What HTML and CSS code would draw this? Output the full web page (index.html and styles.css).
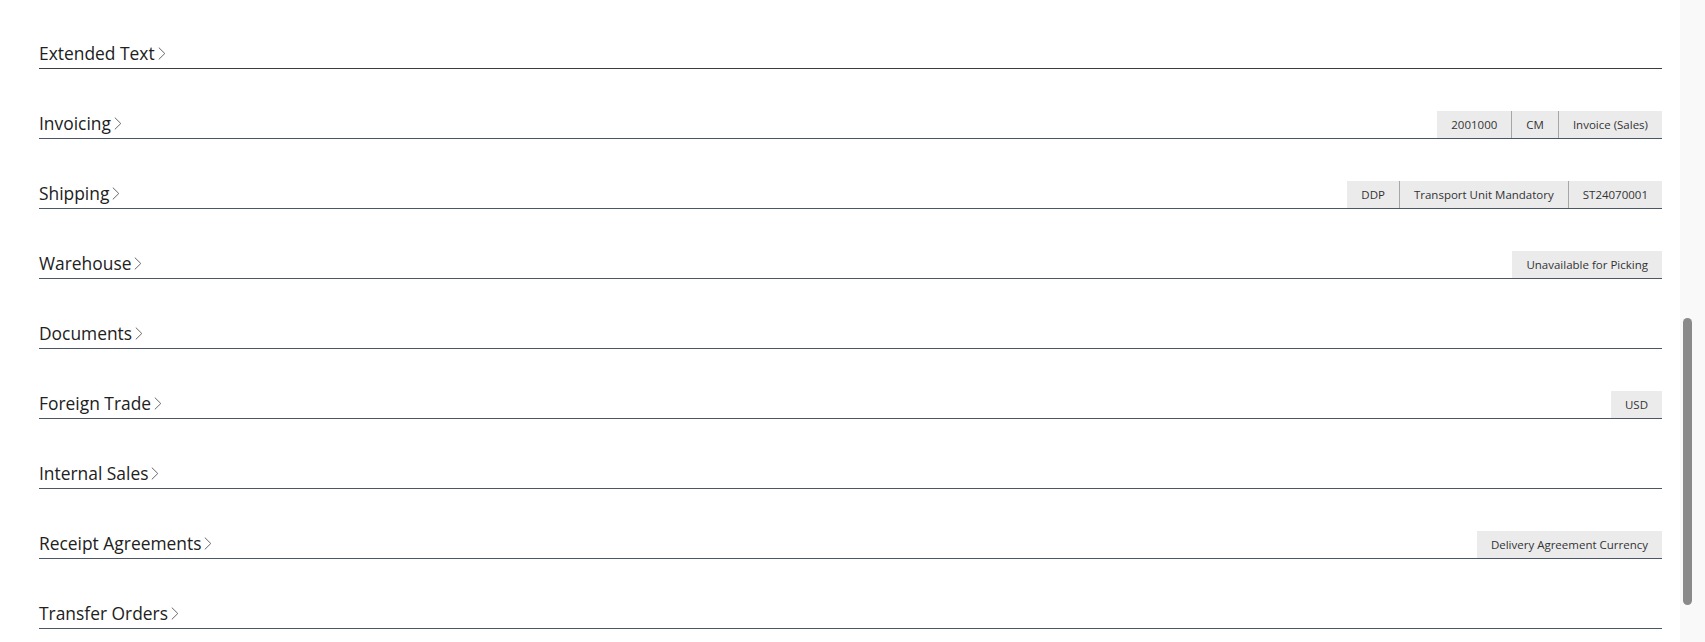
FILE: index.html
```html
<!DOCTYPE html>
<html lang="en">
<head>
    <meta charset="UTF-8">
    <meta name="viewport" content="width=device-width, initial-scale=1.0">
    <title>Sales Order - FastTabs</title>
    <link rel="stylesheet" href="styles.css">
</head>
<body>
    <div class="page">
        <div class="main">
            <div class="fasttab first">
                <div class="tab-title">Extended Text <span class="chevron"><svg width="8" height="13" viewBox="0 0 8 13"><polyline points="0.8,0.6 6.8,6.5 0.8,12.4"/></svg></span></div>
            </div>

            <div class="fasttab">
                <div class="tab-title">Invoicing <span class="chevron"><svg width="8" height="13" viewBox="0 0 8 13"><polyline points="0.8,0.6 6.8,6.5 0.8,12.4"/></svg></span></div>
                <div class="summary">
                    <span class="pill">2001000</span>
                    <span class="pill">CM</span>
                    <span class="pill">Invoice (Sales)</span>
                </div>
            </div>

            <div class="fasttab">
                <div class="tab-title">Shipping <span class="chevron"><svg width="8" height="13" viewBox="0 0 8 13"><polyline points="0.8,0.6 6.8,6.5 0.8,12.4"/></svg></span></div>
                <div class="summary">
                    <span class="pill">DDP</span>
                    <span class="pill">Transport Unit Mandatory</span>
                    <span class="pill">ST24070001</span>
                </div>
            </div>

            <div class="fasttab">
                <div class="tab-title">Warehouse <span class="chevron"><svg width="8" height="13" viewBox="0 0 8 13"><polyline points="0.8,0.6 6.8,6.5 0.8,12.4"/></svg></span></div>
                <div class="summary">
                    <span class="pill">Unavailable for Picking</span>
                </div>
            </div>

            <div class="fasttab">
                <div class="tab-title">Documents <span class="chevron"><svg width="8" height="13" viewBox="0 0 8 13"><polyline points="0.8,0.6 6.8,6.5 0.8,12.4"/></svg></span></div>
            </div>

            <div class="fasttab">
                <div class="tab-title">Foreign Trade <span class="chevron"><svg width="8" height="13" viewBox="0 0 8 13"><polyline points="0.8,0.6 6.8,6.5 0.8,12.4"/></svg></span></div>
                <div class="summary">
                    <span class="pill">USD</span>
                </div>
            </div>

            <div class="fasttab">
                <div class="tab-title">Internal Sales <span class="chevron"><svg width="8" height="13" viewBox="0 0 8 13"><polyline points="0.8,0.6 6.8,6.5 0.8,12.4"/></svg></span></div>
            </div>

            <div class="fasttab">
                <div class="tab-title">Receipt Agreements <span class="chevron"><svg width="8" height="13" viewBox="0 0 8 13"><polyline points="0.8,0.6 6.8,6.5 0.8,12.4"/></svg></span></div>
                <div class="summary">
                    <span class="pill">Delivery Agreement Currency</span>
                </div>
            </div>

            <div class="fasttab">
                <div class="tab-title">Transfer Orders <span class="chevron"><svg width="8" height="13" viewBox="0 0 8 13"><polyline points="0.8,0.6 6.8,6.5 0.8,12.4"/></svg></span></div>
            </div>
        </div>

        <div class="scrollbar">
            <div class="thumb"></div>
        </div>
    </div>
</body>
</html>
```

FILE: styles.css
```css
:root {
    --text: #212121;
    --line: #4b5666;
    --pill-bg: #ebebec;
    --pill-sep: #a6a6a6;
}

* {
    margin: 0;
    padding: 0;
    box-sizing: border-box;
    font-family: 'Open Sans', 'Noto Sans', sans-serif;
}

body {
    background: white;
    color: var(--text);
    height: 642px;
    overflow: hidden;
}

.page {
    display: flex;
    height: 642px;
}

.main {
    flex: 1;
    padding: 41px 18px 0 39px;
    display: flex;
    flex-direction: column;
    gap: 42px;
}

.fasttab {
    display: flex;
    justify-content: space-between;
    align-items: flex-end;
    height: 28px;
    border-bottom: 1px solid var(--line);
}

.fasttab.first {
    border-bottom-color: #3c3c3c;
}

.tab-title {
    font-size: 17.4px;
    line-height: 20px;
    margin-bottom: 5px;
    white-space: nowrap;
    display: flex;
    align-items: flex-end;
}

.chevron {
    display: inline-flex;
    margin-left: 3px;
    margin-bottom: 3px;
}

.chevron svg {
    fill: none;
    stroke: #666;
    stroke-width: 1;
}

.summary {
    display: flex;
    height: 27px;
}

.pill {
    background: var(--pill-bg);
    font-size: 11.5px;
    color: #333;
    padding: 0 14px;
    line-height: 27px;
    white-space: nowrap;
}

.pill + .pill {
    border-left: 1px solid var(--pill-sep);
}

.scrollbar {
    width: 25px;
    background: #f9f9f9;
    padding: 318px 0 0 3px;
}

.thumb {
    width: 9px;
    height: 287px;
    background: #8a8a8a;
    border-radius: 5px;
}
```
